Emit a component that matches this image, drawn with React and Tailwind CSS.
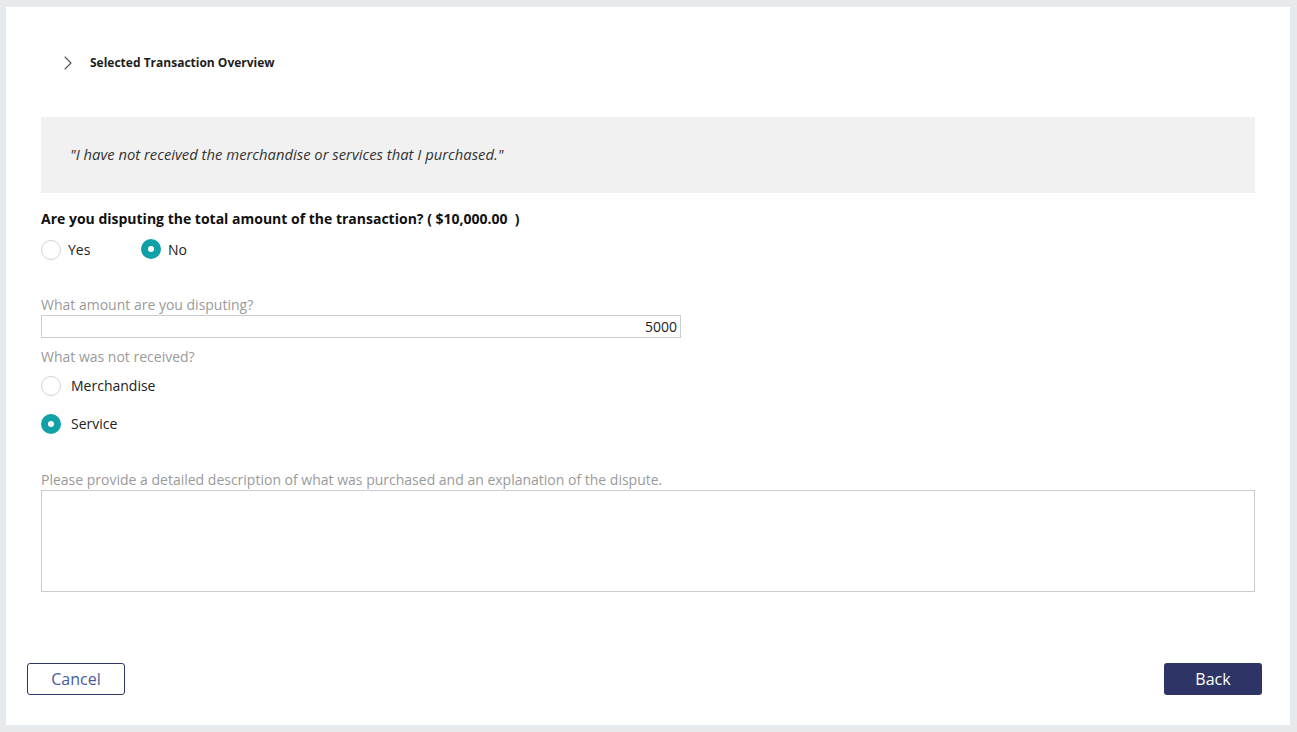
import { ChevronRight } from "lucide-react";

function Radio({ label, checked, gap = "gap-[7px]" }) {
  return (
    <label className={`flex items-center ${gap} text-[14px] text-[#222]`}>
      {checked ? (
        <span className="w-[20px] h-[20px] rounded-full bg-[#0fa0a8] flex items-center justify-center">
          <span className="w-[6px] h-[6px] rounded-full bg-white" />
        </span>
      ) : (
        <span className="w-[20px] h-[20px] rounded-full border border-[#cfd3d8] bg-white" />
      )}
      <span>{label}</span>
    </label>
  );
}

export default function App() {
  return (
    <div
      className="w-[1297px] h-[732px] bg-[#e6eaed] pt-[7px] pl-[6px]"
      style={{ fontFamily: '"Open Sans", sans-serif' }}
    >
      <div className="w-[1284px] h-[718px] bg-white relative flex flex-col">
        {/* Header */}
        <div className="flex items-center h-[110px] pl-[50px] pt-[1px]">
          <ChevronRight size={24} strokeWidth={1.1} className="text-[#4a5160]" />
          <span className="ml-[10px] text-[12px] font-bold text-[#1d1d1d]">Selected Transaction Overview</span>
        </div>

        <div className="px-[35px]">
          <div className="bg-[#f1f1f1] h-[76px] flex items-center pl-[29px] pb-[2px]">
            <p className="italic text-[14.8px] text-[#333]">"I have not received the merchandise or services that I purchased."</p>
          </div>

          <div className="mt-[16px] text-[14px] font-bold text-[#111] leading-[20px]">
            Are you disputing the total amount of the transaction? ( $10,000.00 &nbsp;)
          </div>

          <div className="flex mt-[10px] h-[20px]">
            <div className="w-[100px]">
              <Radio label="Yes" />
            </div>
            <Radio label="No" checked />
          </div>

          <div className="mt-[36px] text-[14px] text-[#9a9a9a] leading-[20px]">What amount are you disputing?</div>
          <div className="w-[640px] h-[23px] border border-[#c9cdd2] flex items-center justify-end pr-[3px] text-[14px] text-[#222]">
            5000
          </div>

          <div className="mt-[9px] text-[14px] text-[#9a9a9a] leading-[20px]">What was not received?</div>
          <div className="mt-[8px] h-[20px]">
            <Radio label="Merchandise" gap="gap-[10px]" />
          </div>
          <div className="mt-[18px] h-[20px]">
            <Radio label="Service" checked gap="gap-[10px]" />
          </div>

          <div className="mt-[37px] text-[14px] text-[#9a9a9a] leading-[20px]">
            Please provide a detailed description of what was purchased and an explanation of the dispute.
          </div>
          <div className="h-[102px] border border-[#c9cdd2]" />
        </div>

        <div className="flex justify-between pl-[21px] pr-[28px] mt-[71px]">
          <button className="w-[98px] h-[32px] border border-[#2e3566] rounded-[3px] text-[16px] text-[#4a5a9a] bg-white">
            Cancel
          </button>
          <button className="w-[98px] h-[32px] rounded-[3px] text-[16px] text-white bg-[#2e3566]">
            Back
          </button>
        </div>
      </div>
    </div>
  );
}
